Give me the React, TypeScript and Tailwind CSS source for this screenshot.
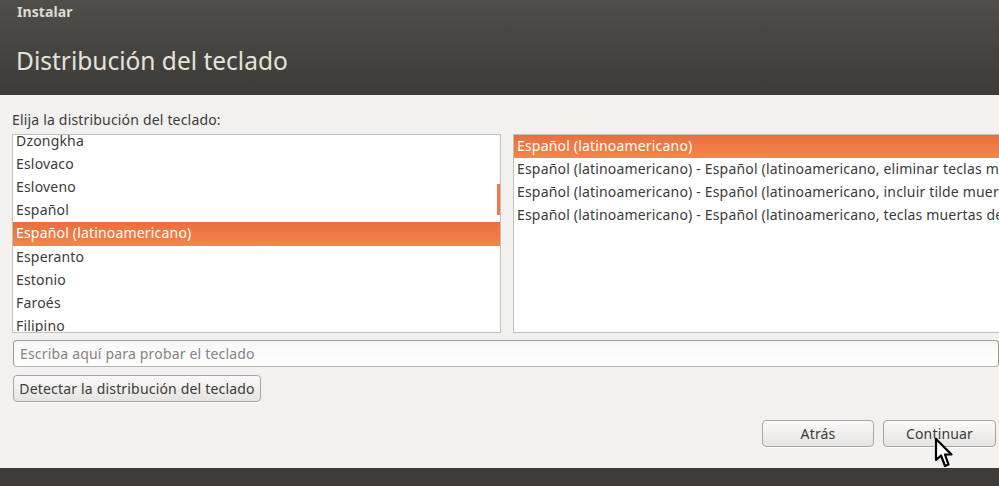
import type { ReactNode } from 'react';

const layouts = [
  'Dzongkha',
  'Eslovaco',
  'Esloveno',
  'Español',
  'Español (latinoamericano)',
  'Esperanto',
  'Estonio',
  'Faroés',
  'Filipino',
];

const variants = [
  'Español (latinoamericano)',
  'Español (latinoamericano) - Español (latinoamericano, eliminar teclas muertas)',
  'Español (latinoamericano) - Español (latinoamericano, incluir tilde muerta)',
  'Español (latinoamericano) - Español (latinoamericano, teclas muertas de Sun)',
];

function Row({ label, selected, height }: { label: string; selected: boolean; height: string }) {
  return (
    <div
      className={`${height} pl-[3px] leading-[22px] whitespace-nowrap ${
        selected ? 'bg-gradient-to-b from-[#e96f3c] to-[#f4844f] text-white' : 'text-[#3c3b37]'
      }`}
    >
      {label}
    </div>
  );
}

function GtkButton({ children, className = '' }: { children: ReactNode; className?: string }) {
  return (
    <button
      className={`h-[27px] rounded-[4px] border border-[#a8a49e] bg-gradient-to-b from-[#fbfafa] to-[#e6e4e1] text-[#3c3b37] text-center shadow-[0_1px_0_#fff] ${className}`}
    >
      {children}
    </button>
  );
}

export default function App() {
  return (
    <div className="relative flex h-[486px] w-[999px] flex-col overflow-hidden bg-[#f2f1f0] font-['Noto_Sans',sans-serif] text-[14px] tracking-[0.18px]">
      <header className="flex h-[95px] shrink-0 flex-col bg-gradient-to-b from-[#4f4e49] to-[#3c3b37] pl-[17px]">
        <div className="mt-[3px] text-[14px] leading-[18px] font-bold tracking-[0.1px] text-[#dfdbd2]">Instalar</div>
        <h1 className="mt-[24px] -ml-[1px] text-[24.5px] leading-[32px] tracking-normal text-[#e6e2da]">
          Distribución del teclado
        </h1>
      </header>

      <main className="flex flex-1 flex-col pl-[12px]">
        <label className="mt-[15px] h-[24px] leading-[20px] text-[#3c3b37]">
          Elija la distribución del teclado:
        </label>

        <div className="flex h-[199px] gap-[12px]">
          <div className="relative h-full w-[489px] shrink-0 overflow-hidden border border-[#c3bfb9] bg-white">
            <div className="-mt-[5.4px]">
              {layouts.map((name) => (
                <Row key={name} label={name} height="h-[23.2px]" selected={name === 'Español (latinoamericano)'} />
              ))}
            </div>
            <div className="absolute top-[49px] right-0 h-[31px] w-[3px] bg-[#ef7b49]" />
          </div>

          <div className="h-full w-[500px] shrink-0 overflow-hidden border border-[#c3bfb9] bg-white">
            {variants.map((name, i) => (
              <Row key={name} label={name} height="h-[23px]" selected={i === 0} />
            ))}
          </div>
        </div>

        <div className="mt-[7px] ml-[1px] flex h-[27px] w-[986px] items-center rounded-[4px] border border-[#9d9a94] border-b-[#b5b2ac] bg-gradient-to-b from-[#f7f7f7] to-white pl-[6px] text-[#87837e]">
          Escriba aquí para probar el teclado
        </div>

        <GtkButton className="mt-[8px] ml-[1px] w-[248px]">Detectar la distribución del teclado</GtkButton>

        <div className="mt-[18px] flex justify-end gap-[9px] pr-[3px]">
          <GtkButton className="w-[112px]">Atrás</GtkButton>
          <GtkButton className="w-[113px]">Continuar</GtkButton>
        </div>
      </main>

      <footer className="h-[18px] shrink-0 bg-[#3c3b37]" />

      <svg className="absolute top-[437px] left-[933px]" width="22" height="33" viewBox="0 0 22 33">
        <path
          d="M3 2 L3 23 L8 18.5 L12 29 L15.5 27.5 L12 17.5 L18.5 17.5 Z"
          fill="#fff"
          stroke="#000"
          strokeWidth="2.2"
          strokeLinejoin="round"
        />
      </svg>
    </div>
  );
}
